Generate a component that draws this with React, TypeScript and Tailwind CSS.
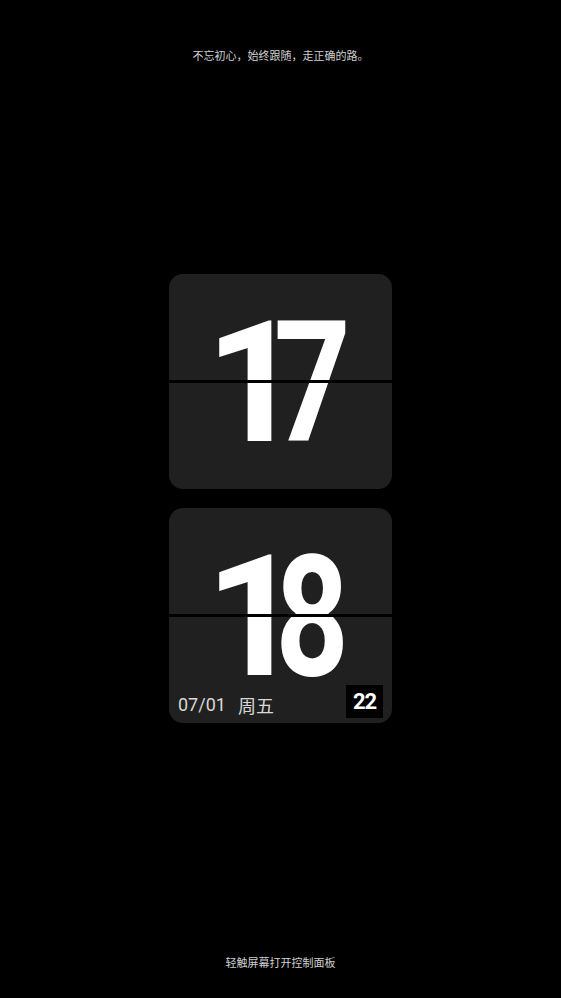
import React from "react";

const digitFont = "text-white font-bold leading-none [font-family:'Roboto',Arial,sans-serif] text-[168px]";

function Card({ a, b, bScale, children }: { a: string; b: string; bScale: string; children?: React.ReactNode }) {
  return (
    <div className="relative w-[223px] h-[215px] rounded-[14px] bg-[#202020] overflow-hidden flex items-center justify-center">
      <div className="flex items-center mt-[5px]">
        <span className={`${digitFont} translate-x-[5px]`}>{a}</span>
        <span className={`${digitFont} ml-[-33px] ${bScale}`}>{b}</span>
      </div>
      <div className="absolute left-0 right-0 top-[106px] h-[3px] bg-black" />
      {children}
    </div>
  );
}

export default function App() {
  return (
    <div className="w-[561px] h-[998px] bg-black flex flex-col items-center [font-family:'Noto_Sans_CJK_SC','Noto_Sans',sans-serif]">
      <div className="mt-[47px] text-[11px] leading-[16px] text-[#d0d0d0]">不忘初心，始终跟随，走正确的路。</div>
      <div className="mt-[211px] flex flex-col gap-[19px]">
        <Card a="1" b="7" bScale="scale-x-[0.8]" />
        <Card a="1" b="8" bScale="scale-x-[0.76]">
          <div className="absolute left-[9px] bottom-[6px] flex items-center text-[18px] leading-[24px] text-[#d8d8d8] [font-family:'Roboto','Noto_Sans_CJK_SC',sans-serif]">
            <span>07/01</span>
            <span className="ml-[12px] [font-family:'Noto_Sans_CJK_SC',sans-serif]">周五</span>
          </div>
          <div className="absolute left-[177px] top-[177px] w-[37px] h-[33px] bg-black flex items-center justify-center">
            <span className="text-white font-bold text-[22px] leading-none tracking-[-1px] [font-family:'Roboto',Arial,sans-serif]">22</span>
          </div>
        </Card>
      </div>
      <div className="flex-1" />
      <div className="mb-[28px] text-[11px] leading-[16px] text-[#d0d0d0]">轻触屏幕打开控制面板</div>
    </div>
  );
}
